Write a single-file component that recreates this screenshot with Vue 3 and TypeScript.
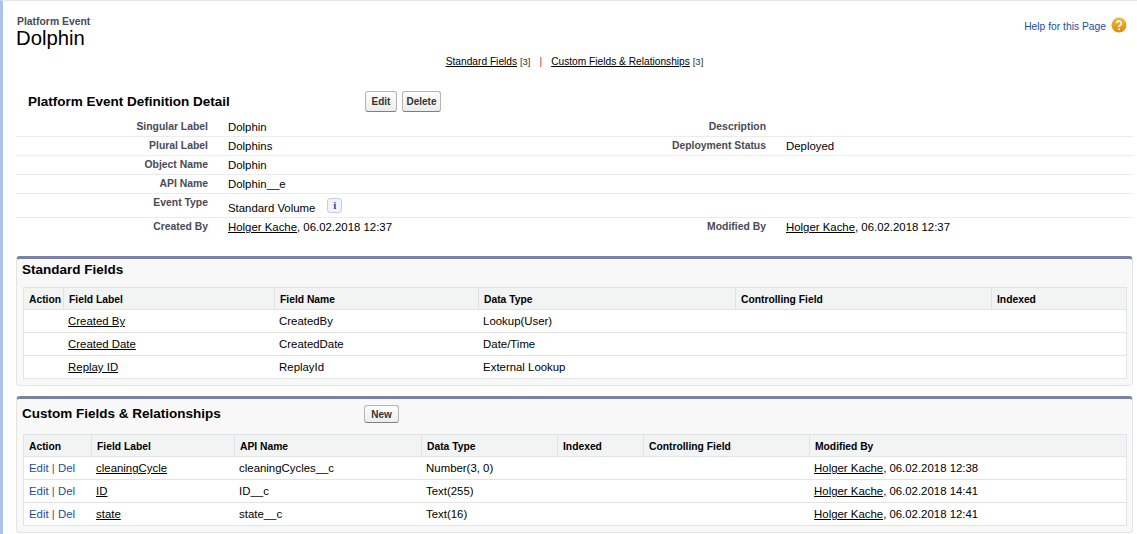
<script setup lang="ts">
interface DetailRow {
  label: string
  value?: string
  sideLabel?: string
  sideValue?: string
}

const details: DetailRow[] = [
  { label: 'Singular Label', value: 'Dolphin', sideLabel: 'Description' },
  { label: 'Plural Label', value: 'Dolphins', sideLabel: 'Deployment Status', sideValue: 'Deployed' },
  { label: 'Object Name', value: 'Dolphin' },
  { label: 'API Name', value: 'Dolphin__e' },
]

const standardCols = [40, 211, 204, 257, 256, 135]
const standardHead = ['Action', 'Field Label', 'Field Name', 'Data Type', 'Controlling Field', 'Indexed']
const standardRows = [
  { label: 'Created By', name: 'CreatedBy', type: 'Lookup(User)' },
  { label: 'Created Date', name: 'CreatedDate', type: 'Date/Time' },
  { label: 'Replay ID', name: 'ReplayId', type: 'External Lookup' },
]

const customCols = [68, 143, 187, 136, 86, 166, 317]
const customHead = ['Action', 'Field Label', 'API Name', 'Data Type', 'Indexed', 'Controlling Field', 'Modified By']
const customRows = [
  { label: 'cleaningCycle', api: 'cleaningCycles__c', type: 'Number(3, 0)', date: '06.02.2018 12:38' },
  { label: 'ID', api: 'ID__c', type: 'Text(255)', date: '06.02.2018 14:41' },
  { label: 'state', api: 'state__c', type: 'Text(16)', date: '06.02.2018 12:41' },
]
</script>

<template>
  <div class="page">
    <header class="top">
      <div>
        <div class="eyebrow">Platform Event</div>
        <h1>Dolphin</h1>
      </div>
      <div class="help">
        <span>Help for this Page</span>
        <svg width="16" height="16" viewBox="0 0 16 16">
          <defs>
            <linearGradient id="helpFill" x1="0" y1="0" x2="0" y2="1">
              <stop offset="0" stop-color="#f6b73c" />
              <stop offset="1" stop-color="#dc8a0c" />
            </linearGradient>
          </defs>
          <circle cx="8" cy="8" r="7.5" fill="url(#helpFill)" />
          <path d="M5.6 6.2a2.4 2.3 0 1 1 3.7 2c-.9.6-1.3 1-1.3 1.9" fill="none" stroke="#fff" stroke-width="1.7" />
          <circle cx="8" cy="12.2" r="1" fill="#fff" />
        </svg>
      </div>
    </header>

    <nav class="jump">
      <span><a>Standard Fields</a> <small>[3]</small></span>
      <i>|</i>
      <span><a>Custom Fields &amp; Relationships</a> <small>[3]</small></span>
    </nav>

    <section class="detail">
      <div class="detail-head">
        <h2>Platform Event Definition Detail</h2>
        <div class="btns">
          <button>Edit</button>
          <button>Delete</button>
        </div>
      </div>

      <div v-for="row in details" :key="row.label" class="d-row">
        <div class="d-label">{{ row.label }}</div>
        <div class="d-value">{{ row.value }}</div>
        <div class="d-label">{{ row.sideLabel }}</div>
        <div class="d-value">{{ row.sideValue }}</div>
      </div>
      <div class="d-row tall">
        <div class="d-label">Event Type</div>
        <div class="d-value volume">
          Standard Volume
          <span class="info">i</span>
        </div>
        <div></div>
        <div></div>
      </div>
      <div class="d-row last">
        <div class="d-label">Created By</div>
        <div class="d-value"><a>Holger Kache</a>, 06.02.2018 12:37</div>
        <div class="d-label">Modified By</div>
        <div class="d-value"><a>Holger Kache</a>, 06.02.2018 12:37</div>
      </div>
    </section>

    <section class="panel first">
      <div class="panel-head">
        <h3>Standard Fields</h3>
      </div>
      <table>
        <colgroup>
          <col v-for="(w, i) in standardCols" :key="i" :style="{ width: w + 'px' }" />
        </colgroup>
        <thead>
          <tr>
            <th v-for="h in standardHead" :key="h">{{ h }}</th>
          </tr>
        </thead>
        <tbody>
          <tr v-for="row in standardRows" :key="row.name">
            <td></td>
            <td><a>{{ row.label }}</a></td>
            <td>{{ row.name }}</td>
            <td>{{ row.type }}</td>
            <td></td>
            <td></td>
          </tr>
        </tbody>
      </table>
    </section>

    <section class="panel">
      <div class="panel-head custom">
        <h3>Custom Fields &amp; Relationships</h3>
        <button class="new">New</button>
      </div>
      <table>
        <colgroup>
          <col v-for="(w, i) in customCols" :key="i" :style="{ width: w + 'px' }" />
        </colgroup>
        <thead>
          <tr>
            <th v-for="h in customHead" :key="h">{{ h }}</th>
          </tr>
        </thead>
        <tbody>
          <tr v-for="row in customRows" :key="row.api">
            <td class="actions"><b>Edit</b> | <b>Del</b></td>
            <td><a>{{ row.label }}</a></td>
            <td>{{ row.api }}</td>
            <td>{{ row.type }}</td>
            <td></td>
            <td></td>
            <td><a>Holger Kache</a>, {{ row.date }}</td>
          </tr>
        </tbody>
      </table>
    </section>
  </div>
</template>

<style scoped>
.page {
  box-sizing: border-box;
  width: 1137px;
  height: 534px;
  overflow: hidden;
  padding: 0 4px 0 13px;
  border-top: 1px solid #e8e8e8;
  border-left: 3px solid #a9c4e6;
  background: #fff;
  font-family: "Liberation Sans", Arial, sans-serif;
  font-size: 11.4px;
  color: #000;
}
a {
  color: #000;
  text-decoration: underline;
}
.top {
  display: flex;
  justify-content: space-between;
  padding-top: 15px;
  height: 39px;
}
.eyebrow {
  font-size: 10.4px;
  font-weight: 700;
  line-height: 12px;
  padding-left: 1px;
  color: #4a4a56;
}
h1 {
  margin: -2px 0 0;
  font-size: 20.3px;
  font-weight: 400;
  line-height: 24px;
}
.help {
  display: flex;
  align-items: flex-start;
  gap: 5px;
  padding: 1px 6px 0 0;
  font-size: 10.3px;
  line-height: 20px;
  color: #1b4f9c;
}
.jump {
  display: flex;
  justify-content: center;
  gap: 9px;
  height: 14px;
  line-height: 14px;
  font-size: 10.2px;
  color: #333;
}
.jump small {
  font-size: 9.5px;
}
.jump i {
  font-style: normal;
  color: #a8343a;
}
.detail {
  padding-top: 22px;
}
.detail-head {
  display: flex;
  align-items: flex-start;
  height: 27px;
}
h2 {
  margin: 0;
  width: 337px;
  padding-left: 12px;
  font-size: 13.5px;
  font-weight: 700;
  line-height: 21px;
}
.btns {
  display: flex;
  gap: 5px;
}
button {
  box-sizing: border-box;
  min-width: 32px;
  height: 21px;
  padding: 0 3.5px;
  border: 1px solid #b5b5b5;
  border-bottom-color: #7f7f7f;
  border-radius: 3px;
  background: linear-gradient(#fdfdfd, #ececec);
  font-family: inherit;
  font-size: 10px;
  font-weight: 700;
  color: #333;
}
.d-row {
  display: grid;
  grid-template-columns: 192px 366px 192px 1fr;
  height: 19px;
  box-sizing: border-box;
  border-bottom: 1px solid #ececec;
  line-height: 18px;
}
.d-row.tall {
  height: 24px;
}
.d-row.last {
  border-bottom: 0;
}
.d-label {
  text-align: right;
  font-size: 10.4px;
  font-weight: 700;
  color: #4a4a56;
}
.d-value {
  padding-left: 20px;
}
.volume {
  display: flex;
  align-items: center;
  padding-top: 5px;
  height: 18px;
}
.info {
  box-sizing: border-box;
  width: 15px;
  height: 15px;
  margin: -6px 0 0 12px;
  border: 1px solid #c9ced8;
  border-radius: 3px;
  background: #f0f3f8;
  text-align: center;
  font-family: "Liberation Serif", serif;
  font-size: 11px;
  font-weight: 700;
  line-height: 13px;
  color: #1b4f9c;
}
.panel {
  box-sizing: border-box;
  margin-bottom: 10px;
  padding: 0 6px 6px;
  border: 1px solid #e4e4e4;
  border-top: 3px solid #7a83a5;
  border-radius: 4px;
  background: #f8f8f8;
}
.panel.first {
  margin-top: 19px;
}
.panel-head {
  display: flex;
  align-items: flex-start;
  height: 28px;
}
.panel-head.custom {
  height: 35px;
  padding-top: 4px;
  box-sizing: border-box;
}
.panel-head h3 {
  margin: 1px 0 0 -1px;
  width: 342px;
  font-size: 13.5px;
  font-weight: 700;
  line-height: 20px;
}
.new {
  height: 18px;
  width: 35px;
  padding: 0;
  margin-top: 2px;
}
table {
  width: 1103px;
  table-layout: fixed;
  border-collapse: collapse;
  background: #fff;
  border: 1px solid #e0e3e5;
}
th {
  height: 19px;
  padding: 2px 5px 0;
  border: 1px solid #e0e3e5;
  background: #f2f3f3;
  text-align: left;
  font-size: 10.3px;
  font-weight: 700;
}
td {
  height: 22px;
  padding: 0 4.6px;
  border-bottom: 1px solid #e3e3e3;
  white-space: nowrap;
}
.actions {
  color: #555;
  padding-left: 5px;
}
.actions b {
  font-weight: 400;
  color: #1b4f9c;
}
</style>

<style>
html,
body {
  margin: 0;
  background: #fff;
}
</style>
